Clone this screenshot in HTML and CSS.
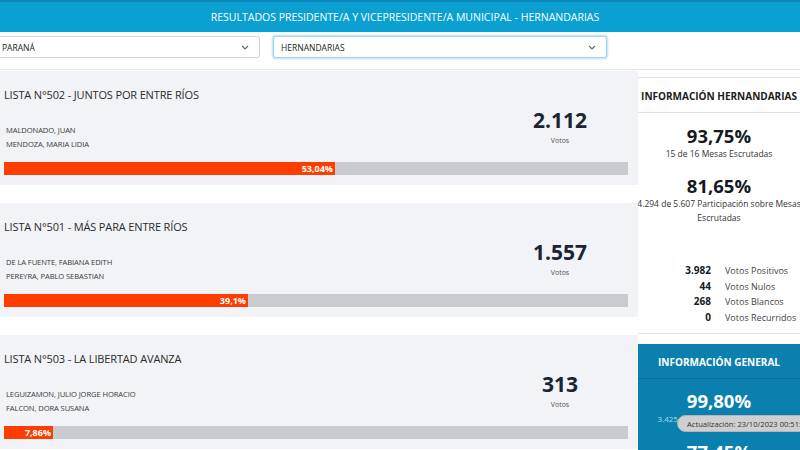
FILE: index.html
```html
<!DOCTYPE html>
<html lang="es">

<head>
    <meta charset="UTF-8" />
    <meta name="viewport" content="width=device-width, initial-scale=1.0" />
    <title>Resultados Municipales - Hernandarias</title>
    <link rel="stylesheet" href="styles.css">
</head>

<body>
    <header class="topbar">
        <h1>RESULTADOS PRESIDENTE/A Y VICEPRESIDENTE/A MUNICIPAL - HERNANDARIAS</h1>
    </header>

    <div class="filters">
        <div class="select dept">
            <span>PARANÁ</span>
            <svg class="chevron" viewBox="0 0 8 5" width="8" height="5"><path d="M1 1l3 3 3-3" /></svg>
        </div>
        <div class="select city focused">
            <span>HERNANDARIAS</span>
            <svg class="chevron" viewBox="0 0 8 5" width="8" height="5"><path d="M1 1l3 3 3-3" /></svg>
        </div>
    </div>

    <main class="content">
        <section class="lists">
            <article class="card">
                <h2 class="card-title">LISTA N°502 - JUNTOS POR ENTRE RÍOS</h2>
                <div class="card-row">
                    <div class="names">
                        <p>MALDONADO, JUAN</p>
                        <p>MENDOZA, MARIA LIDIA</p>
                    </div>
                    <div class="votes">
                        <strong>2.112</strong>
                        <span>Votos</span>
                    </div>
                </div>
                <div class="bar"><div class="fill" style="width: 53.04%">53,04%</div></div>
            </article>

            <article class="card">
                <h2 class="card-title">LISTA N°501 - MÁS PARA ENTRE RÍOS</h2>
                <div class="card-row">
                    <div class="names">
                        <p>DE LA FUENTE, FABIANA EDITH</p>
                        <p>PEREYRA, PABLO SEBASTIAN</p>
                    </div>
                    <div class="votes">
                        <strong>1.557</strong>
                        <span>Votos</span>
                    </div>
                </div>
                <div class="bar"><div class="fill" style="width: 39.1%">39,1%</div></div>
            </article>

            <article class="card">
                <h2 class="card-title">LISTA N°503 - LA LIBERTAD AVANZA</h2>
                <div class="card-row">
                    <div class="names">
                        <p>LEGUIZAMON, JULIO JORGE HORACIO</p>
                        <p>FALCON, DORA SUSANA</p>
                    </div>
                    <div class="votes">
                        <strong>313</strong>
                        <span>Votos</span>
                    </div>
                </div>
                <div class="bar"><div class="fill" style="width: 7.86%">7,86%</div></div>
            </article>
        </section>

        <aside class="sidebar">
            <div class="panel local">
                <h3>INFORMACIÓN HERNANDARIAS</h3>
                <div class="panel-body">
                    <div class="big">93,75%</div>
                    <p class="sub">15 de 16 Mesas Escrutadas</p>
                    <div class="big second">81,65%</div>
                    <p class="sub wide">4.294 de 5.607 Participación sobre Mesas Escrutadas</p>

                    <div class="totals">
                        <b>3.982</b><span>Votos Positivos</span>
                        <b>44</b><span>Votos Nulos</span>
                        <b>268</b><span>Votos Blancos</span>
                        <b>0</b><span>Votos Recurridos</span>
                    </div>
                </div>
            </div>

            <div class="panel general">
                <h3>INFORMACIÓN GENERAL</h3>
                <div class="panel-body">
                    <div class="big">99,80%</div>
                    <p class="sub">3.425 de 3.432 Mesas Escrutadas</p>
                    <div class="big second">77,45%</div>
                </div>
            </div>
        </aside>
    </main>

    <div class="toast">Actualización: 23/10/2023 00:51:38</div>
</body>

</html>
```

FILE: styles.css
```css
:root{
    --blue: #0aa0d2;
    --blue-dark: #0b7fae;
    --card: #f2f3f6;
    --bar: #c9cbce;
    --red: #ff3d00;
    --line: #e2e3e6;
    --text: #333;
}

body{
    margin: 0;
    font-family: "Open Sans", "Noto Sans", sans-serif;
    color: var(--text);
    overflow: hidden;
    height: 450px;
}
h1, h2, h3, p{
    margin: 0;
}

.topbar{
    background-color: var(--blue);
    border-top: 2px solid #0c86b8;
    height: 30px;
    display: flex;
    align-items: center;
    justify-content: center;
}
.topbar h1{
    color: #fff;
    font-size: 10.5px;
    font-weight: normal;
    padding-left: 10px;
}

.filters{
    display: flex;
    gap: 13px;
    height: 38px;
    padding-top: 4px;
    box-sizing: border-box;
    border-bottom: 1px solid var(--line);
}
.select{
    height: 22px;
    box-sizing: border-box;
    border: 1px solid #cfd2d6;
    border-radius: 3px;
    display: flex;
    align-items: center;
    justify-content: space-between;
    padding: 0 10px 0 7px;
    font-size: 8.5px;
    color: #222;
    background-color: #fff;
}
.select.dept{
    width: 266px;
    margin-left: -6px;
}
.select.city{
    width: 334px;
}
.select.focused{
    border-color: #9ad6ee;
    box-shadow: 0 0 0 1.5px rgba(10, 160, 210, 0.22);
}
.chevron{
    fill: none;
    stroke: #666;
    stroke-width: 1.1;
}

.content{
    display: flex;
    margin-top: 1px;
}
.lists{
    width: 638px;
    flex-shrink: 0;
}
.card{
    background-color: var(--card);
    padding: 15px 10px 10px 4px;
    margin-bottom: 18px;
    display: flex;
    flex-direction: column;
}
.card-title{
    font-size: 11px;
    letter-spacing: -0.15px;
    font-weight: normal;
    line-height: 18px;
    color: #2b2b2b;
}
.card-row{
    display: flex;
    justify-content: space-between;
    height: 45px;
    padding-right: 28px;
}
.names{
    padding: 19px 0 0 2px;
    font-size: 7.6px;
    letter-spacing: -0.1px;
    line-height: 14px;
    color: #3a3a3a;
}
.votes{
    width: 80px;
    display: flex;
    flex-direction: column;
    align-items: center;
    padding-top: 3px;
}
.votes strong{
    font-size: 21px;
    line-height: 27px;
    color: #1c2433;
}
.votes span{
    font-size: 7px;
    line-height: 10px;
    margin-top: 2px;
    color: #555;
}
.bar{
    margin-top: 13px;
    height: 13px;
    background-color: var(--bar);
}
.fill{
    height: 100%;
    background-color: var(--red);
    color: #fff;
    font-size: 9px;
    font-weight: bold;
    line-height: 13px;
    text-align: right;
    padding-right: 2px;
    box-sizing: border-box;
}

.sidebar{
    width: 162px;
    flex-shrink: 0;
    overflow: hidden;
    text-align: center;
}
.panel h3{
    font-size: 10px;
    font-weight: bold;
    height: 34px;
    line-height: 36px;
    white-space: nowrap;
    margin: 0 -10px;
}
.local{
    margin-top: 6px;
    border-top: 1px solid var(--line);
    border-bottom: 1px solid var(--line);
    padding-bottom: 8px;
}
.local h3{
    color: #1c1c1c;
    border-bottom: 1px solid var(--line);
}
.panel-body{
    padding-top: 12px;
}
.big{
    font-size: 18.5px;
    font-weight: bold;
    line-height: 22px;
    color: #151a22;
}
.big.second{
    margin-top: 14px;
}
.sub{
    font-size: 8.5px;
    line-height: 14px;
    color: #333;
}
.sub.wide{
    margin: 0 -12px;
}
.totals{
    display: grid;
    grid-template-columns: 73px 1fr;
    column-gap: 14px;
    margin-top: 38px;
    text-align: left;
    line-height: 15.6px;
}
.totals b{
    text-align: right;
    font-size: 10px;
    color: #151a22;
}
.totals span{
    font-size: 9px;
    color: #444;
}

.general{
    margin-top: 10px;
    background-color: var(--blue-dark);
    color: #fff;
    height: 120px;
}
.general h3{
    border-bottom: 1px solid #0a6f99;
}
.general .panel-body{
    padding-top: 11px;
}
.general .big{
    color: #fff;
}
.general .sub{
    color: #a9dcf2;
    font-size: 8px;
}
.general .big.second{
    margin-top: 15px;
}

.toast{
    position: fixed;
    left: 677px;
    top: 415px;
    height: 17px;
    line-height: 16px;
    box-sizing: border-box;
    padding: 0 12px 0 9px;
    white-space: nowrap;
    background-color: #cfcfd0;
    border: 1px solid #b5b5b7;
    border-radius: 9px;
    font-size: 7.6px;
    color: #333;
}
```
